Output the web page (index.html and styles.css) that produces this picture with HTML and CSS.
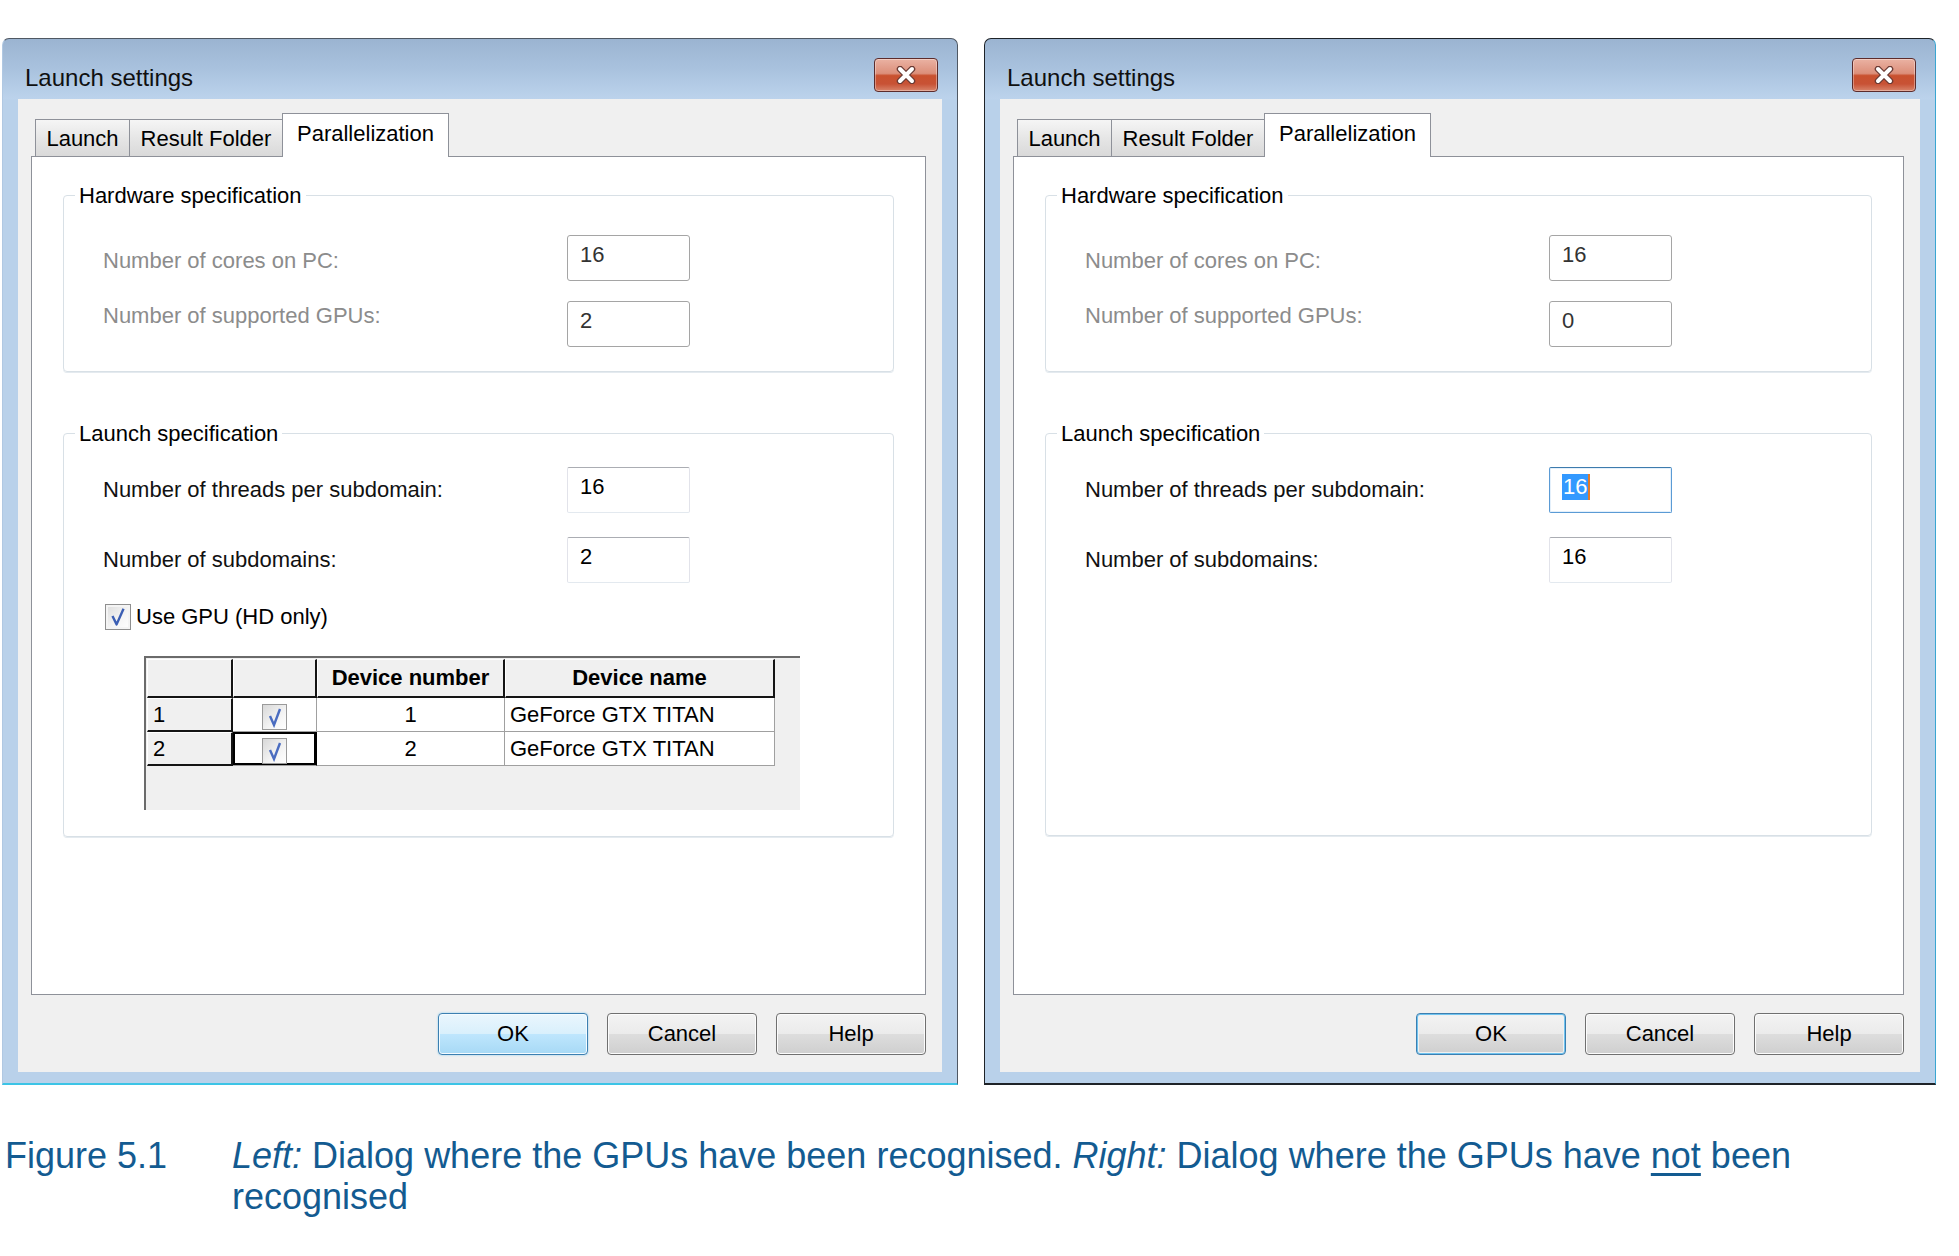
FILE: index.html
```html
<!DOCTYPE html>
<html lang="en">
<head>
<meta charset="utf-8">
<title>Launch settings – Parallelization</title>
<link rel="stylesheet" href="styles.css">
</head>
<body>
<div class="page">
  <div class="dialogs">
    <!-- LEFT DIALOG -->
    <div class="dialog dialog-left">
      <div class="titlebar">
        <span class="title">Launch settings</span>
        <div class="close">
          <svg width="26" height="18" viewBox="0 0 26 18">
            <path d="M7 3 L19 15 M19 3 L7 15" stroke="#6a3a34" stroke-width="6.5" stroke-linecap="round"/>
            <path d="M7 3 L19 15 M19 3 L7 15" stroke="#ffffff" stroke-width="4" stroke-linecap="round"/>
          </svg>
        </div>
      </div>
      <div class="client">
        <div class="tabs">
          <div class="tab tab-launch">Launch</div>
          <div class="tab tab-result">Result Folder</div>
          <div class="tab tab-par active">Parallelization</div>
        </div>
        <div class="panel">
          <div class="group group-hw">
            <div class="group-title">Hardware specification</div>
            <div class="rows rows-hw">
              <div class="label disabled first">Number of cores on PC:</div>
              <div class="input input-disabled">16</div>
              <div class="label disabled second">Number of supported GPUs:</div>
              <div class="input input-disabled">2</div>
            </div>
          </div>
          <div class="group group-launch">
            <div class="group-title">Launch specification</div>
            <div class="rows rows-launch">
              <div class="label">Number of threads per subdomain:</div>
              <div class="input">16</div>
              <div class="label">Number of subdomains:</div>
              <div class="input">2</div>
            </div>
            <div class="check-row">
              <span class="checkbox">
                <svg width="26" height="26" viewBox="0 0 26 26">
                  <path d="M7 12 L11.5 21 L19 4" fill="none" stroke="#3c5fb4" stroke-width="2.6" stroke-linejoin="round"/>
                </svg>
              </span>
              <span class="check-label">Use GPU (HD only)</span>
            </div>
            <div class="grid-wrap">
              <table class="grid">
                <colgroup>
                  <col class="c1"><col class="c2"><col class="c3"><col class="c4">
                </colgroup>
                <thead>
                  <tr><th></th><th></th><th>Device number</th><th>Device name</th></tr>
                </thead>
                <tbody>
                  <tr>
                    <td class="rh">1</td>
                    <td class="cb"><span class="mini-check"><svg width="20" height="22" viewBox="0 0 20 22"><path d="M5 10 L9 19 L15 3" fill="none" stroke="#4a6cc0" stroke-width="2.4"/></svg></span></td>
                    <td class="num">1</td>
                    <td class="name">GeForce GTX TITAN</td>
                  </tr>
                  <tr>
                    <td class="rh">2</td>
                    <td class="cb focus"><span class="mini-check"><svg width="20" height="22" viewBox="0 0 20 22"><path d="M5 10 L9 19 L15 3" fill="none" stroke="#4a6cc0" stroke-width="2.4"/></svg></span></td>
                    <td class="num">2</td>
                    <td class="name">GeForce GTX TITAN</td>
                  </tr>
                </tbody>
              </table>
            </div>
          </div>
        </div>
        <div class="buttons">
          <div class="btn btn-ok-hover">OK</div>
          <div class="btn">Cancel</div>
          <div class="btn">Help</div>
        </div>
      </div>
    </div>

    <!-- RIGHT DIALOG -->
    <div class="dialog dialog-right">
      <div class="titlebar">
        <span class="title">Launch settings</span>
        <div class="close">
          <svg width="26" height="18" viewBox="0 0 26 18">
            <path d="M7 3 L19 15 M19 3 L7 15" stroke="#6a3a34" stroke-width="6.5" stroke-linecap="round"/>
            <path d="M7 3 L19 15 M19 3 L7 15" stroke="#ffffff" stroke-width="4" stroke-linecap="round"/>
          </svg>
        </div>
      </div>
      <div class="client">
        <div class="tabs">
          <div class="tab tab-launch">Launch</div>
          <div class="tab tab-result">Result Folder</div>
          <div class="tab tab-par active">Parallelization</div>
        </div>
        <div class="panel">
          <div class="group group-hw">
            <div class="group-title">Hardware specification</div>
            <div class="rows rows-hw">
              <div class="label disabled first">Number of cores on PC:</div>
              <div class="input input-disabled">16</div>
              <div class="label disabled second">Number of supported GPUs:</div>
              <div class="input input-disabled">0</div>
            </div>
          </div>
          <div class="group group-launch">
            <div class="group-title">Launch specification</div>
            <div class="rows rows-launch">
              <div class="label">Number of threads per subdomain:</div>
              <div class="input input-focus"><span class="selected">16</span></div>
              <div class="label">Number of subdomains:</div>
              <div class="input">16</div>
            </div>
          </div>
        </div>
        <div class="buttons">
          <div class="btn btn-default">OK</div>
          <div class="btn">Cancel</div>
          <div class="btn">Help</div>
        </div>
      </div>
    </div>
  </div>

  <div class="caption">
    <div class="fig-no">Figure 5.1</div>
    <div class="fig-text"><i>Left:</i> Dialog where the GPUs have been recognised. <i>Right:</i> Dialog where the GPUs have <u>not</u> been<br>recognised</div>
  </div>
</div>
</body>
</html>
```

FILE: styles.css
```css
* { box-sizing: border-box; }

html, body {
  margin: 0;
  padding: 0;
  background: #ffffff;
}

body {
  font-family: "Liberation Sans", Arial, sans-serif;
  font-size: 22px;
  color: #000;
}

.page {
  width: 1959px;
  padding-top: 38px;
}

.dialogs {
  display: flex;
  gap: 26px;
  padding-left: 2px;
}

/* ---------- window frame ---------- */
.dialog {
  height: 1047px;
  display: flex;
  flex-direction: column;
  padding: 0 15px 11px 15px;
  border: 1px solid #4f5863;
  border-radius: 7px 7px 0 0;
  background: linear-gradient(#9bb4d1 0px, #a9c2de 30px, #bcd3ec 60px, #b9d1ea 61px, #b9d1ea 100%);
}

.dialog-left {
  width: 956px;
  border-left-color: #b0c8e2;
  border-bottom: 2px solid #3cc4e6;
}

.dialog-right {
  width: 952px;
  border-color: #1e2328;
  border-right-color: #3aa6d2;
  border-bottom: 2px solid #1e2328;
}

.titlebar {
  height: 60px;
  display: flex;
  align-items: flex-start;
  justify-content: space-between;
  padding: 0 4px 0 7px;
}

.title {
  font-size: 24px;
  line-height: 28px;
  margin-top: 25px;
  color: #101010;
}

.close {
  width: 64px;
  height: 34px;
  margin-top: 19px;
  border: 1px solid #5c2c2c;
  border-radius: 4px;
  background: linear-gradient(#eab2a3 0%, #dc8f7a 45%, #c9512f 52%, #c85235 78%, #d8846b 100%);
  box-shadow: inset 0 0 0 1px rgba(255, 255, 255, 0.35);
  display: flex;
  align-items: center;
  justify-content: center;
}

/* ---------- client area ---------- */
.client {
  flex: 1;
  display: flex;
  flex-direction: column;
  background: #f0f0f0;
  padding: 14px 16px 17px 13px;
}

.tabs {
  position: relative;
  z-index: 1;
  display: flex;
  align-items: flex-end;
  height: 44px;
  margin-bottom: -1px;
  padding-left: 4px;
}

.tab {
  height: 38px;
  display: flex;
  align-items: center;
  justify-content: center;
  border: 1px solid #8e9199;
  margin-right: -1px;
  background: linear-gradient(#f5f5f5, #e6e6e6 50%, #d9d9d9);
  color: #000;
  padding-top: 1px;
}

.tab-launch { width: 95px; }
.tab-result { width: 154px; }
.tab-par { width: 167px; }

.tab.active {
  height: 44px;
  background: #ffffff;
  border-bottom: none;
  padding-bottom: 4px;
}

.panel {
  flex: 1;
  background: #ffffff;
  border: 1px solid #8e9199;
  padding-top: 38px;
}

/* ---------- group boxes ---------- */
.group {
  margin: 0 31px;
  border: 1px solid #d8e0e6;
  border-radius: 4px;
  box-shadow: 0 1px 0 #e4eaef;
}

.group-hw {
  padding-bottom: 24px;
}

.group-launch {
  margin-top: 61px;
  min-height: 403px;
  padding-bottom: 26px;
}

.group-title {
  display: block;
  width: max-content;
  margin: -13px 0 0 11px;
  padding: 0 4px;
  height: 26px;
  line-height: 26px;
  background: #ffffff;
  color: #000;
}

.rows {
  display: grid;
  grid-template-columns: 464px 123px;
  align-items: center;
  padding-left: 39px;
}

.rows-hw {
  margin-top: 26px;
  row-gap: 20px;
}

.rows-launch {
  margin-top: 20px;
  row-gap: 24px;
}

.label {
  color: #111;
}

.label.disabled {
  color: #8c8c8c;
}

.label.first {
  margin-top: 5px;
}

.label.second {
  margin-bottom: 16px;
}

.input {
  height: 46px;
  padding: 0 0 6px 12px;
  display: flex;
  align-items: center;
  background: #fff;
  border: 1px solid #e2e3ea;
  border-top-color: #abadb3;
  border-bottom-color: #e3e9ef;
  border-radius: 2px;
  color: #000;
}

.input-disabled {
  border: 1px solid #a5a5a5;
  border-radius: 3px;
  color: #333;
}

.input-focus {
  border: 1px solid #5b9bd5;
  border-top-color: #3d7bad;
  box-shadow: inset 0 0 0 1px #e4f0fb;
}

.selected {
  background: #3399ff;
  color: #ffffff;
  padding: 0 1px;
  border-right: 2px solid #e07a2a;
  line-height: 26px;
}

/* ---------- checkbox ---------- */
.check-row {
  display: flex;
  align-items: center;
  gap: 5px;
  margin: 21px 0 0 41px;
  height: 26px;
}

.checkbox {
  width: 26px;
  height: 26px;
  border: 1px solid #8f8f8f;
  background: linear-gradient(135deg, #dcdcdc, #f6f6f6 60%, #ffffff);
  box-shadow: inset 0 0 0 2px #f4f4f4;
  display: flex;
  align-items: center;
  justify-content: center;
}

.checkbox svg { display: block; }

/* ---------- device grid ---------- */
.grid-wrap {
  width: 656px;
  height: 154px;
  margin: 26px 0 0 80px;
  background: #f0f0f0;
  border-left: 2px solid #6b6b6b;
  border-top: 2px solid #6b6b6b;
  padding: 1px 0 0 1px;
}

.grid {
  border-collapse: separate;
  border-spacing: 0;
  table-layout: fixed;
  width: 628px;
}

.grid col.c1 { width: 86px; }
.grid col.c2 { width: 84px; }
.grid col.c3 { width: 188px; }
.grid col.c4 { width: 270px; }

.grid th {
  height: 39px;
  padding: 0;
  background: #f0f0f0;
  font-weight: bold;
  font-size: 22px;
  text-align: center;
  border-top: 1px solid #ffffff;
  border-left: 1px solid #ffffff;
  border-right: 2px solid #141414;
  border-bottom: 2px solid #141414;
  white-space: nowrap;
  overflow: hidden;
}

.grid td {
  height: 34px;
  padding: 0;
  background: #ffffff;
  border-right: 1px solid #a0a0a0;
  border-bottom: 1px solid #a0a0a0;
  font-size: 22px;
  white-space: nowrap;
}

.grid td.rh {
  background: #f0f0f0;
  text-align: left;
  padding-left: 5px;
  border-top: 1px solid #ffffff;
  border-left: 1px solid #ffffff;
  border-right: 2px solid #141414;
  border-bottom: 2px solid #141414;
}

.grid td.cb {
  text-align: center;
  vertical-align: bottom;
}

.grid td.cb.focus {
  box-shadow: inset 0 0 0 2px #000;
  border-right-color: #000;
}

.mini-check {
  display: inline-flex;
  align-items: center;
  justify-content: center;
  width: 25px;
  height: 26px;
  border: 1px solid #9a9a9a;
  background: linear-gradient(135deg, #d8d8d8, #f4f4f4 60%, #ffffff);
  margin-bottom: 1px;
  vertical-align: bottom;
}

.mini-check svg { display: block; }

.grid td.num { text-align: center; }
.grid td.name { text-align: left; padding-left: 5px; }

/* ---------- buttons ---------- */
.buttons {
  display: flex;
  justify-content: flex-end;
  gap: 19px;
  margin-top: 18px;
  height: 42px;
}

.btn {
  width: 150px;
  height: 42px;
  display: flex;
  align-items: center;
  justify-content: center;
  border: 1px solid #707070;
  border-radius: 4px;
  background: linear-gradient(#f3f3f3 0%, #ebebeb 49%, #dddddd 51%, #cfcfcf 100%);
  box-shadow: inset 0 0 0 1px #fcfcfc;
  color: #000;
}

.btn-ok-hover {
  border-color: #3c7fb1;
  background: linear-gradient(#eaf6fd 0%, #d9f0fc 49%, #bee6fd 51%, #a7d9f5 100%);
  box-shadow: inset 0 0 0 1px #f4fbff, 0 0 2px #7cc8ee;
}

.btn-default {
  border-color: #3c7fb1;
  box-shadow: inset 0 0 0 1px #6fc3ef, inset 0 0 0 2px #f0f0f0;
}

/* ---------- caption ---------- */
.caption {
  display: grid;
  grid-template-columns: 227px auto;
  margin-top: 50px;
  padding-left: 5px;
  font-family: "Liberation Sans", Arial, sans-serif;
  font-size: 36px;
  line-height: 41px;
  color: #135b91;
}

.caption u {
  text-decoration-thickness: 3px;
  text-underline-offset: 5px;
}
```
